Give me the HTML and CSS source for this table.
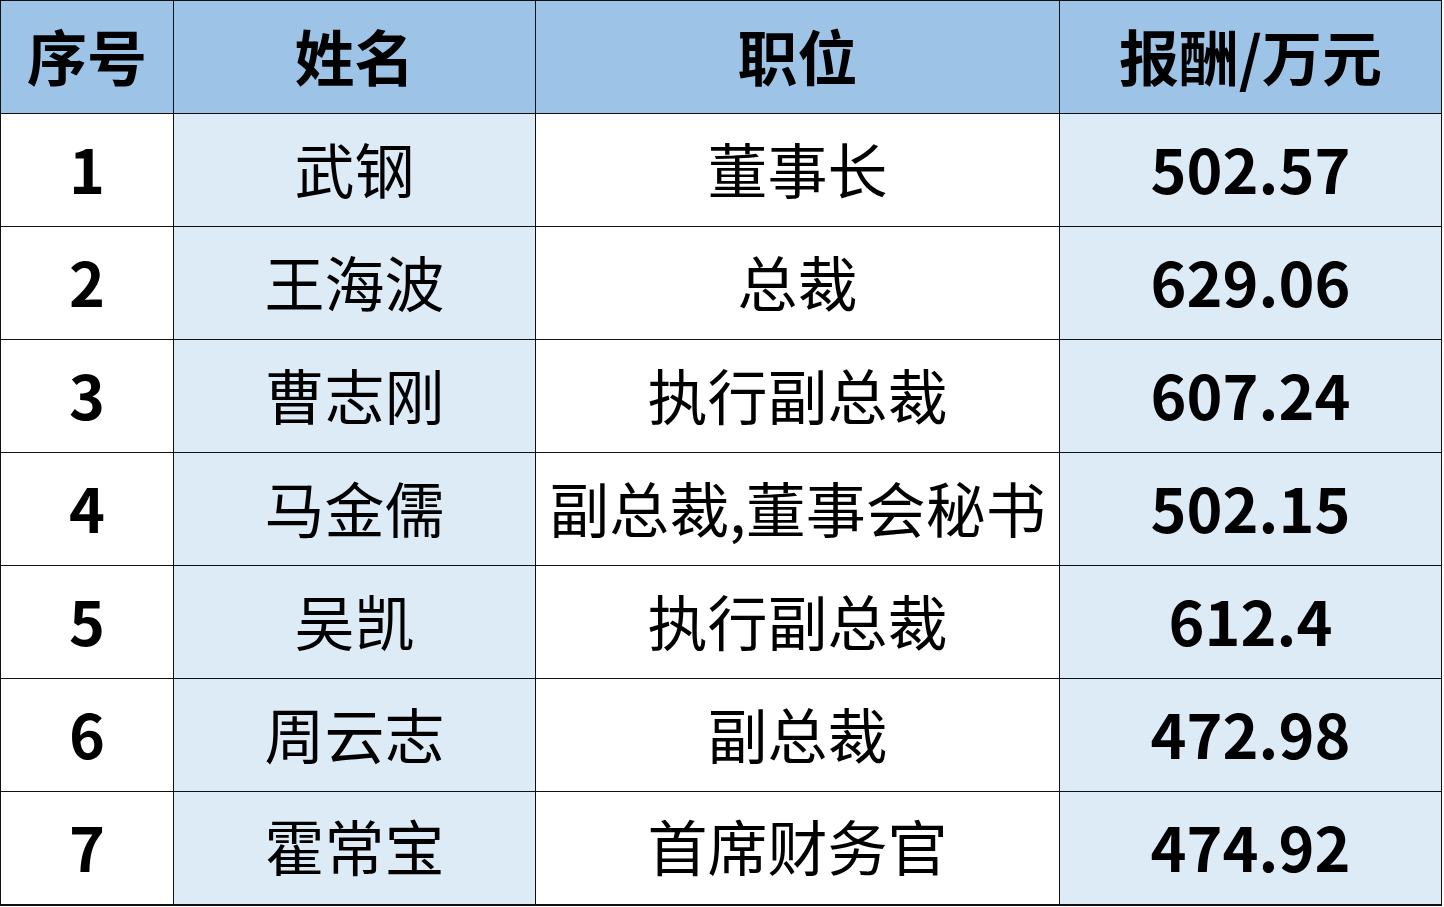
FILE: index.html
```html
<!DOCTYPE html>
<html lang="zh">
<head>
<meta charset="utf-8">
<link rel="stylesheet" href="styles.css">
</head>
<body>
<table class="pay">
  <colgroup>
    <col class="c1"><col class="c2"><col class="c3"><col class="c4">
  </colgroup>
  <thead>
    <tr><th>序号</th><th class="alt">姓名</th><th>职位</th><th class="alt">报酬/万元</th></tr>
  </thead>
  <tbody>
    <tr><td class="num">1</td><td class="alt">武钢</td><td>董事长</td><td class="alt num">502.57</td></tr>
    <tr><td class="num">2</td><td class="alt">王海波</td><td>总裁</td><td class="alt num">629.06</td></tr>
    <tr><td class="num">3</td><td class="alt">曹志刚</td><td>执行副总裁</td><td class="alt num">607.24</td></tr>
    <tr><td class="num">4</td><td class="alt">马金儒</td><td>副总裁,董事会秘书</td><td class="alt num">502.15</td></tr>
    <tr><td class="num">5</td><td class="alt">吴凯</td><td>执行副总裁</td><td class="alt num">612.4</td></tr>
    <tr><td class="num">6</td><td class="alt">周云志</td><td>副总裁</td><td class="alt num">472.98</td></tr>
    <tr><td class="num">7</td><td class="alt">霍常宝</td><td>首席财务官</td><td class="alt num">474.92</td></tr>
  </tbody>
</table>
</body>
</html>
```
FILE: styles.css
```css
html, body {
  margin: 0;
  padding: 0;
  background: #ffffff;
}
.pay {
  border-collapse: collapse;
  table-layout: fixed;
  width: 1441px;
  font-family: "Noto Sans CJK SC", "Noto Sans", sans-serif;
  color: #000;
}
.c1 { width: 173px; }
.c2 { width: 362px; }
.c3 { width: 524px; }
.c4 { width: 382px; }
.pay th, .pay td {
  border: 1px solid #111;
  height: 113px;
  box-sizing: border-box;
  padding: 0 0 5px 0;
  text-align: center;
  vertical-align: middle;
  line-height: 1;
  white-space: nowrap;
}
.pay th {
  background: #9dc3e6;
  font-size: 60px;
  font-weight: 700;
}
.pay td {
  font-size: 60px;
  font-weight: 400;
  background: #ffffff;
}
.pay td.alt {
  background: #ddebf7;
}
.pay td.num {
  font-weight: 700;
  font-size: 61px;
}
.pay tbody tr:last-child td {
  border-bottom: 2px solid #111;
}
```
